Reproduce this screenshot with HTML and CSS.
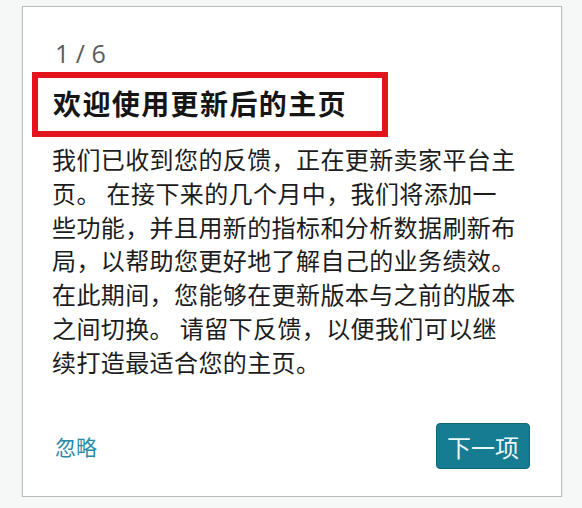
FILE: index.html
```html
<!DOCTYPE html>
<html lang="zh-CN">
<head>
<meta charset="utf-8">
<title>欢迎使用更新后的主页</title>
<link rel="stylesheet" href="styles.css">
</head>
<body>
<div class="card">
  <div class="step">1 / 6</div>
  <h1 class="title">欢迎使用更新后的主页</h1>
  <p class="text">我们已收到您的反馈，正在更新卖家平台主<br>页。 在接下来的几个月中，我们将添加一<br>些功能，并且用新的指标和分析数据刷新布<br>局，以帮助您更好地了解自己的业务绩效。<br>在此期间，您能够在更新版本与之前的版本<br>之间切换。 请留下反馈，以便我们可以继<br>续打造最适合您的主页。</p>
  <div class="footer">
    <a class="skip" href="#">忽略</a>
    <button class="next" type="button">下一项</button>
  </div>
</div>
</body>
</html>
```

FILE: styles.css
```css
html, body {
  margin: 0;
  padding: 0;
  background: #f6f7f7;
  font-family: "Noto Sans", "Noto Sans CJK SC", sans-serif;
}

.card {
  box-sizing: border-box;
  width: 540px;
  height: 491px;
  margin: 6px 0 0 22px;
  padding: 0 30px 0 30px;
  background: #ffffff;
  border: 1px solid #bcbcbc;
  box-shadow: 0 1px 2px rgba(0, 0, 0, 0.12);
  display: flex;
  flex-direction: column;
}

.step {
  margin-top: 31px;
  font-family: "Open Sans", "Noto Sans", sans-serif;
  font-size: 25px;
  line-height: 30px;
  color: #5c5c5c;
  padding-left: 2px;
}

.title {
  box-sizing: border-box;
  width: 356px;
  height: 65px;
  margin: 4px 0 0 -21px;
  padding: 0 0 0 15px;
  border: 6px solid #e2141d;
  font-family: "Noto Sans CJK SC", sans-serif;
  font-size: 28px;
  font-weight: 700;
  letter-spacing: 1.4px;
  line-height: 51px;
  color: #151515;
}

.text {
  margin: 5px 0 0 -1px;
  font-family: "Noto Sans CJK SC", sans-serif;
  font-size: 24px;
  letter-spacing: 0.4px;
  line-height: 33.8px;
  color: #1c1c1c;
}

.footer {
  margin-top: auto;
  margin-bottom: 27px;
  display: flex;
  align-items: center;
  justify-content: space-between;
}

.skip {
  margin-left: 2px;
  font-family: "Noto Sans CJK SC", sans-serif;
  font-size: 21px;
  color: #2a89a6;
  text-decoration: none;
}

.next {
  box-sizing: border-box;
  width: 94px;
  height: 46px;
  margin-right: 1px;
  padding: 0;
  background: #167c92;
  border: 1px solid #0f6679;
  border-radius: 4px;
  font-family: "Noto Sans CJK SC", sans-serif;
  font-size: 24px;
  color: #eaf7f9;
  cursor: pointer;
}
```
